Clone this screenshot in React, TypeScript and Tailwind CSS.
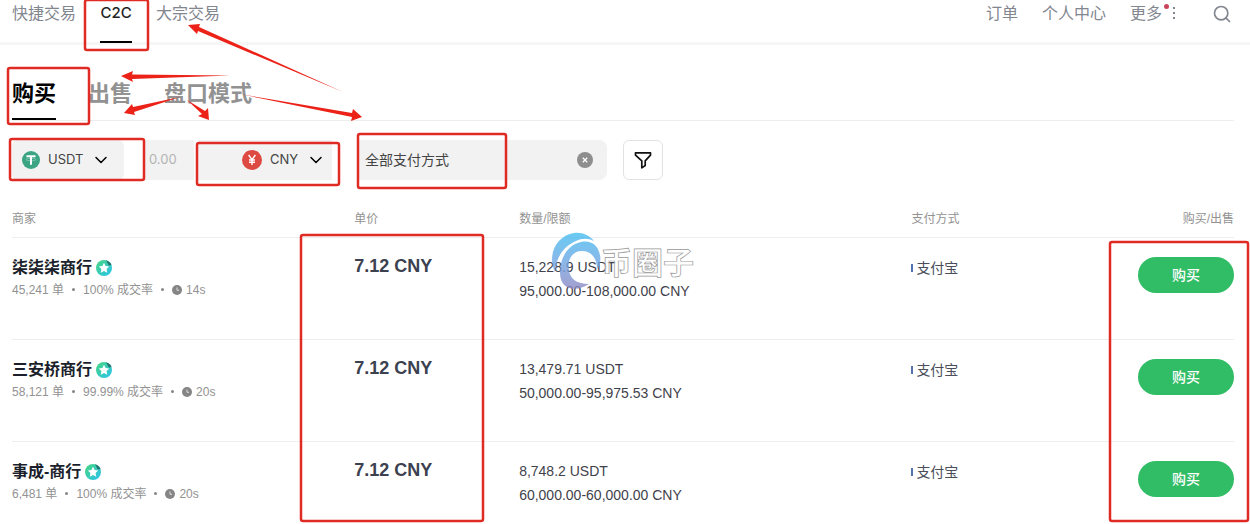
import React from 'react'
import { ChevronDown, Search } from 'lucide-react'

const merchants = [
    { name: '柒柒柒商行', orders: '45,241 单', rate: '100% 成交率', time: '14s', price: '7.12 CNY', amount: '15,228.9 USDT', limit: '95,000.00-108,000.00 CNY' },
    { name: '三安桥商行', orders: '58,121 单', rate: '99.99% 成交率', time: '20s', price: '7.12 CNY', amount: '13,479.71 USDT', limit: '50,000.00-95,975.53 CNY' },
    { name: '事成-商行', orders: '6,481 单', rate: '100% 成交率', time: '20s', price: '7.12 CNY', amount: '8,748.2 USDT', limit: '60,000.00-60,000.00 CNY' },
]

function Header() {
    return (
        <header className="flex h-[45px] items-start justify-between border-b-3 border-[#f6f6f6] pl-3 pr-[18px] text-base leading-[26px] text-[#82868f]">
            <nav className="flex">
                <a href="#quick">快捷交易</a>
                <a href="#c2c" className="ml-6 h-[43px] w-8 border-b-2 border-black text-center text-[15px] font-medium text-[#222]">C2C</a>
                <a href="#block" className="ml-6">大宗交易</a>
            </nav>
            <nav className="flex items-start">
                <a href="#orders">订单</a>
                <a href="#me" className="ml-6">个人中心</a>
                <a href="#more" className="relative ml-6 flex">
                    更多
                    <span className="absolute left-[34px] top-1 size-[5px] rounded-full bg-[#c94458]" />
                    <svg className="ml-2.5 mt-1.5 h-4 w-1" viewBox="0 0 4 16" fill="currentColor" aria-hidden="true">
                        <rect x="1" y="1" width="2" height="2" />
                        <rect x="1" y="6" width="2" height="2" />
                        <rect x="1" y="11" width="2" height="2" />
                    </svg>
                </a>
                <button type="button" aria-label="搜索" className="ml-9 mt-1">
                    <Search className="size-5" strokeWidth={2} />
                </button>
            </nav>
        </header>
    )
}

function Tabs() {
    return (
        <div className="ml-3 mr-4 flex h-[76px] items-end border-b border-[#eee] text-[22px] font-bold text-[#929292]">
            <button type="button" className="h-[54px] border-b-2 border-black pt-0.5 text-black">购买</button>
            <button type="button" className="ml-8 h-[54px] border-b-2 border-transparent pt-0.5">出售</button>
            <button type="button" className="ml-8 h-[54px] border-b-2 border-transparent pt-0.5">盘口模式</button>
        </div>
    )
}

function Filters() {
    return (
        <div className="flex h-10 pl-3 text-[13px] text-[#444]">
            <button type="button" className="flex w-28 items-center rounded-md bg-[#f2f2f2] pl-2.5">
                <svg className="size-[18px]" viewBox="0 0 18 18" aria-hidden="true">
                    <circle cx="9" cy="9" r="9" fill="#3ba583" />
                    <path d="M4.5 5.3h9M9 5.3v8.5" stroke="#fff" strokeWidth="2" />
                    <ellipse cx="9" cy="8.6" rx="5" ry="1.2" fill="none" stroke="#fff" strokeWidth=".3" />
                </svg>
                <span className="ml-2">USDT</span>
                <ChevronDown className="ml-2 size-5 text-black" strokeWidth={1.8} />
            </button>
            <input aria-label="金额" placeholder="0.00" className="ml-5 w-[50px] bg-[#f2f2f2] pl-[5px] placeholder:text-[#b4b4b4]" />
            <button type="button" className="ml-1 flex w-[134px] items-center bg-[#f2f2f2] pl-11">
                <svg className="size-5" viewBox="0 0 20 20" aria-hidden="true">
                    <circle cx="10" cy="10" r="10" fill="#dd4a42" />
                    <path d="M6.6 5l3.4 4.6L13.4 5M10 9.6V15M7 10h6M7 12.3h6" fill="none" stroke="#fff" strokeWidth="1.4" />
                </svg>
                <span className="ml-2">CNY</span>
                <ChevronDown className="ml-2 size-5 text-black" strokeWidth={1.8} />
            </button>
            <div className="ml-[26px] flex w-[249px] items-center justify-between rounded-r-lg bg-[#f2f2f2] pl-[7px] pr-3.5 text-sm">
                <input aria-label="支付方式" defaultValue="全部支付方式" className="w-40 bg-transparent" />
                <button type="button" aria-label="清除">
                    <svg className="size-4" viewBox="0 0 16 16" aria-hidden="true">
                        <circle cx="8" cy="8" r="8" fill="#8e8e8e" />
                        <path d="M5.8 5.8l4.4 4.4M10.2 5.8l-4.4 4.4" stroke="#fff" strokeWidth="1.3" />
                    </svg>
                </button>
            </div>
            <button type="button" aria-label="筛选" className="ml-4 flex w-10 items-center justify-center rounded-md border border-[#e2e2e2]">
                <svg className="size-5" viewBox="0 0 20 20" fill="none" stroke="#111" strokeWidth="1.7" strokeLinejoin="round" aria-hidden="true">
                    <path d="M2.5 2.8h15v2.4l-5.3 5.6v4.8l-3.4 2.2v-7L2.5 5.2z" />
                </svg>
            </button>
        </div>
    )
}

function Badge() {
    return (
        <svg className="ml-1 size-4" viewBox="0 0 16 16" aria-hidden="true">
            <defs>
                <linearGradient id="badge" x1="0" y1="0" x2="1" y2="1">
                    <stop offset="0" stopColor="#45d67c" />
                    <stop offset=".5" stopColor="#38ccb8" />
                    <stop offset="1" stopColor="#2cc3f0" />
                </linearGradient>
            </defs>
            <circle cx="8" cy="8" r="8" fill="url(#badge)" />
            <path d="M10 .3A8 8 0 0 1 15.5 5l-2.7.6z" fill="#25736f" />
            <path d="M8 2.8l1.6 3.3 3.6.5-2.6 2.5.6 3.6L8 11l-3.2 1.7.6-3.6-2.6-2.5 3.6-.5z" fill="#fff" />
        </svg>
    )
}

function Clock() {
    return (
        <svg className="mr-1 size-2.5" viewBox="0 0 10 10" aria-hidden="true">
            <circle cx="5" cy="5" r="5" fill="#858585" />
            <path d="M5 2.5V5.3h2" fill="none" stroke="#ddd" strokeWidth="1" />
        </svg>
    )
}

function MerchantTable() {
    return (
        <table className="w-full table-fixed text-left font-['Liberation_Sans','Noto_Sans_CJK_SC',sans-serif]">
            <colgroup>
                <col className="w-[28%]" />
                <col className="w-[13.5%]" />
                <col className="w-[32.1%]" />
                <col />
                <col className="w-[10%]" />
            </colgroup>
            <thead>
                <tr className="h-[38px] border-b border-[#eee] text-xs text-[#929292]">
                    <th className="pt-0.5 font-normal">商家</th>
                    <th className="pt-0.5 font-normal">单价</th>
                    <th className="pt-0.5 font-normal">数量/限额</th>
                    <th className="pt-0.5 font-normal">支付方式</th>
                    <th className="pt-0.5 text-right font-normal">购买/出售</th>
                </tr>
            </thead>
            <tbody>
                {merchants.map((m) => (
                    <tr key={m.name} className="h-[102px] border-b border-[#eee] align-top last:border-0">
                        <td className="pt-[18px]">
                            <div className="flex items-center text-base leading-6 font-bold text-[#1b1f2b]">
                                {m.name}
                                <Badge />
                            </div>
                            <div className="flex items-center text-xs leading-5 text-[#929292]">
                                <span>{m.orders}</span>
                                <i className="mx-2 size-[3px] rounded-full bg-[#858585]" />
                                <span>{m.rate}</span>
                                <i className="mx-2 size-[3px] rounded-full bg-[#858585]" />
                                <Clock />
                                <span>{m.time}</span>
                            </div>
                        </td>
                        <td className="pt-4 text-lg leading-6 font-bold text-[#3c4150]">{m.price}</td>
                        <td className="pt-[17px] text-sm leading-6 text-[#3f424b]">
                            <div>{m.amount}</div>
                            <div>{m.limit}</div>
                        </td>
                        <td className="pt-[18px] text-sm text-[#4a4e5a]">
                            <div className="flex h-6 items-center">
                                <i className="mr-[3px] h-2 w-0.5 bg-[#5473ad]" />
                                支付宝
                            </div>
                        </td>
                        <td className="pt-[19px] text-right">
                            <button type="button" className="h-9 w-24 rounded-full bg-[#31bd65] text-sm font-medium text-white">购买</button>
                        </td>
                    </tr>
                ))}
            </tbody>
        </table>
    )
}

function Watermark() {
    return (
        <svg className="pointer-events-none absolute left-[550px] top-[230px]" width="150" height="66" viewBox="0 0 150 66" aria-hidden="true">
            <defs>
                <linearGradient id="mark" gradientUnits="userSpaceOnUse" x1="0" y1="4" x2="0" y2="60">
                    <stop offset="0" stopColor="#45bdf0" />
                    <stop offset=".5" stopColor="#6fa6e4" />
                    <stop offset="1" stopColor="#8f86c2" />
                </linearGradient>
            </defs>
            <g fill="url(#mark)" opacity=".8">
                <path d="M5 42C-3 25 6 6 24 3c8-1 15 2 20 8-6-3-12-3-18 0C14 16 6 27 5 42z" />
                <path d="M10 42C10 27 19 14 31 12c10-2 17 3 19 13 1 5 0 10-3 14 0-11-6-18-15-18-10 0-15 9-13 19 1 9 8 14 20 14-7 5-17 6-22 3-5-3-7-8-7-15z" />
            </g>
            <text x="51" y="44" className="font-bold" fontSize="31" fill="#fff" fillOpacity=".8" stroke="#999" strokeWidth=".7">币圈子</text>
        </svg>
    )
}

const boxes = [
    [85, 0, 63, 50],
    [8, 68, 81, 56],
    [10, 139, 134, 41],
    [197, 143, 142, 42],
    [358, 134, 148, 54],
    [301, 235, 182, 286],
    [1110, 242, 138, 279],
]

const arrows = [
    'M343 92L198 31l-1 3-9-9 12-1-1 3z',
    'M230 75.5L132 79l1 3-12-6 12-5-1 3.5z',
    'M180 97L134 112l1 3-11-2 8-9 1 3z',
    'M187 100l15 14-4 2 11 4-1-12-3 3z',
    'M240 94l112 23-1 4 11-4-9-8-1 4z',
]

function Marks() {
    return (
        <svg className="pointer-events-none absolute left-0 top-0" width="1250" height="524" aria-hidden="true">
            {boxes.map(([x, y, w, h]) => (
                <rect key={`${x}-${y}`} x={x} y={y} width={w} height={h} rx="2" fill="none" stroke="#e02b24" strokeWidth="2.5" />
            ))}
            {arrows.map((d) => (
                <path key={d} d={d} fill="#ec2218" />
            ))}
        </svg>
    )
}

export default function App() {
    return (
        <div className="relative overflow-hidden bg-white font-[Inter,'Noto_Sans_CJK_SC',sans-serif]">
            <Header />
            <Tabs />
            <main>
                <div className="pt-[19px]">
                    <Filters />
                </div>
                <div className="ml-3 mr-4 mt-[19px]">
                    <MerchantTable />
                </div>
            </main>
            <Watermark />
            <Marks />
        </div>
    )
}
